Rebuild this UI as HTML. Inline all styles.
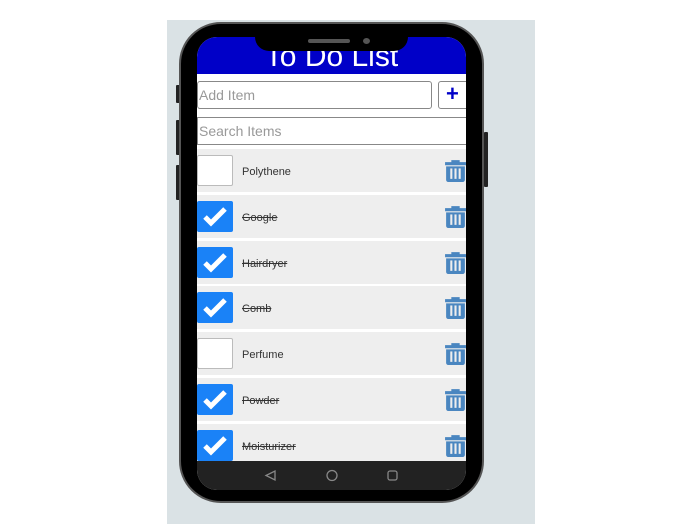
<!DOCTYPE html>
<html><head><style>
*{margin:0;padding:0;box-sizing:border-box}
body{width:694px;height:524px;background:#fff;position:relative;overflow:hidden;font-family:"Liberation Sans",sans-serif}
.panel{position:absolute;left:167px;top:20px;width:368px;height:504px;background:#dae2e5}
.phone{position:absolute;left:179px;top:22px;width:305px;height:481px;background:#000;border-radius:42px;border:2px solid #555}
.btn{position:absolute;background:#222;width:4px;border-radius:1px}
.screen{position:absolute;left:197px;top:37px;width:269px;height:453px;border-radius:20px;overflow:hidden;background:#fff}
.hdr{position:absolute;left:0;top:0;width:269px;height:37px;background:#0000c8;color:#fff;font-size:30px;text-align:center;overflow:hidden}
.notch{position:absolute;left:255px;top:35px;width:153px;height:16px;background:#000;border-radius:0 0 14px 14px}
.inp{position:absolute;background:#fff;border:1px solid #888;border-radius:3px;color:#999;font-size:14px;padding-left:1px}
.row{position:absolute;left:0;width:269px;height:43px;background:#eee}
.cb{position:absolute;left:0;top:6px;width:36px;height:31px;border-radius:2px}
.cb.off{background:#fff;border:1px solid #bbb}
.cb.on{background:#1a82f7}
.t{position:absolute;left:45px;top:17px;font-size:11px;color:#333}
.t.s{text-decoration:line-through}
.tr{position:absolute;left:247px;top:9px}
.nav{position:absolute;left:0;top:424px;width:269px;height:29px;background:#222}
</style></head><body>
<div class="panel"></div>
<div class="btn" style="left:176px;top:85px;height:18px"></div>
<div class="btn" style="left:176px;top:120px;height:35px"></div>
<div class="btn" style="left:176px;top:165px;height:35px"></div>
<div class="btn" style="left:484px;top:132px;height:55px"></div>
<div class="phone"></div>
<div class="screen">
<div class="hdr"><div style="margin-top:2px;line-height:36px">To Do List</div></div>
<div class="inp" style="left:0;top:44px;width:235px;height:28px;line-height:26px">Add Item</div>
<div class="inp" style="left:241px;top:44px;width:32px;height:28px;color:#0000c8;font-size:22px;font-weight:bold;line-height:24px;padding-left:7px">+</div>
<div class="inp" style="left:0;top:80px;width:272px;height:28px;line-height:26px;border-radius:0">Search Items</div>
<div id="rows"></div>
<div class="nav">
<svg width="269" height="29" style="position:absolute;left:0;top:0"><g fill="none" stroke="#888" stroke-width="1.3"><path d="M69 14.5 L78 10 V19Z"/><circle cx="135" cy="14.5" r="5"/><rect x="191" y="10" width="9" height="9" rx="2"/></g></svg>
</div>
</div>
<div class="notch"><div style="position:absolute;left:53px;top:4px;width:42px;height:4px;border-radius:2px;background:#555"></div><div style="position:absolute;left:108px;top:3px;width:7px;height:6px;border-radius:50%;background:#555"></div></div>
<script>
var items=[["Polythene",0],["Google",1],["Hairdryer",1],["Comb",1],["Perfume",0],["Powder",1],["Moisturizer",1]];
var h="";
var trash='<svg width="23" height="24" viewBox="0 0 22 23"><path d="M7 2h8v2h6v3H1V4h6z" fill="#4a86c0"/><path d="M2 8h18v13a2 2 0 0 1-2 2H4a2 2 0 0 1-2-2z" fill="#4a86c0"/><g fill="#eee"><rect x="6" y="10" width="2" height="10"/><rect x="10" y="10" width="2" height="10"/><rect x="14" y="10" width="2" height="10"/></g></svg>';
var chk='<svg width="36" height="31"><path d="M8 16l6 6 14-14" stroke="#fff" stroke-width="5" fill="none"/></svg>';
items.forEach(function(it,i){var top=112+i*45.8;
h+='<div class="row" style="top:'+top+'px"><div class="cb '+(it[1]?'on':'off')+'">'+(it[1]?chk:'')+'</div><div class="t'+(it[1]?' s':'')+'">'+it[0]+'</div><div class="tr">'+trash+'</div></div>';});
document.getElementById("rows").innerHTML=h;
</script>
</body></html>
